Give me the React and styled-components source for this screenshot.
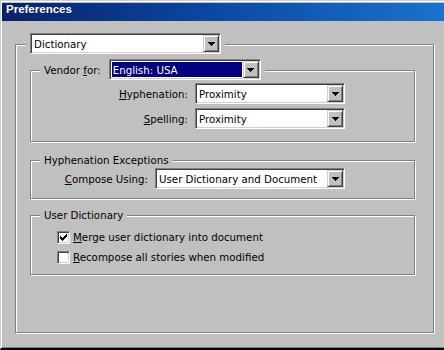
import React from 'react';
import styled, { createGlobalStyle } from 'styled-components';

const GlobalStyle = createGlobalStyle`
  html, body {
    margin: 0;
    padding: 0;
    background: #c0c0c0;
  }
  body {
    font-family: "DejaVu Sans", "Liberation Sans", sans-serif;
    font-size: 10.25px;
    color: #000;
  }
`;

const Window = styled.div`
  width: 444px;
  height: 350px;
  box-sizing: border-box;
  display: flex;
  flex-direction: column;
  background: #c0c0c0;
  border-top: 1px solid #d4d0c8;
  border-left: 1px solid #d4d0c8;
  border-bottom: 2px solid #000;
  box-shadow: inset 1px 1px #fff, inset 0 -1px #808080;
  padding: 2px 0 0 1px;
  overflow: hidden;
`;

const TitleBar = styled.div`
  flex: none;
  height: 18px;
  line-height: 18px;
  padding-left: 4px;
  background: linear-gradient(90deg, #08216b 0%, #0c4aa6 50%, #1a72cc 100%);
  color: #fff;
  font: bold 11.5px "Liberation Sans", Arial, sans-serif;
`;

const Body = styled.div`
  flex: 1;
  min-height: 0;
  display: flex;
  flex-direction: column;
  padding: 23px 10px 15px 13px;
`;

const Group = styled.div`
  position: relative;
  box-sizing: border-box;
  display: flex;
  flex-direction: column;
  border: 1px solid #808080;
  box-shadow: inset 1px 1px #fff, 1px 1px #fff;
  padding: ${p => p.$pad};
  margin-top: ${p => p.$mt || 0}px;
  flex: ${p => (p.$grow ? 1 : 'none')};
`;

const Legend = styled.div`
  position: absolute;
  left: ${p => p.$left}px;
  top: ${p => p.$top}px;
  display: flex;
  align-items: center;
  gap: 8px;
  padding: 0 4px;
  line-height: 14px;
  white-space: nowrap;
  background: #c0c0c0;
`;

const Row = styled.div`
  display: flex;
  align-items: center;
  justify-content: flex-end;
  gap: 7px;
  margin-top: ${p => p.$mt || 0}px;
`;

const Combo = styled.div`
  flex: none;
  display: flex;
  box-sizing: border-box;
  width: ${p => p.$w}px;
  height: 21px;
  padding: 1px;
  background: #fff;
  border: 1px solid;
  border-color: #808080 #fff #fff #808080;
  box-shadow: inset 1px 1px #404040, inset -1px -1px #d4d0c8;
`;

const Value = styled.div`
  flex: 1;
  display: flex;
  align-items: center;
  margin: 1px;
  padding-left: 1px;
  white-space: nowrap;
  overflow: hidden;
  background: ${p => (p.$selected ? '#000080' : 'transparent')};
  color: ${p => (p.$selected ? '#fff' : '#000')};
`;

const ArrowBtn = styled.div`
  flex: none;
  width: 16px;
  height: 17px;
  box-sizing: border-box;
  display: flex;
  align-items: center;
  justify-content: center;
  background: #c0c0c0;
  border: 1px solid;
  border-color: #d4d0c8 #404040 #404040 #d4d0c8;
  box-shadow: inset 1px 1px #fff, inset -1px -1px #808080;
`;

const CheckRow = styled.label`
  display: flex;
  align-items: center;
  gap: 3px;
  height: 20px;
`;

const Box = styled.span`
  flex: none;
  width: 13px;
  height: 13px;
  box-sizing: border-box;
  display: flex;
  align-items: center;
  justify-content: center;
  background: #fff;
  border: 1px solid;
  border-color: #808080 #fff #fff #808080;
  box-shadow: inset 1px 1px #404040, inset -1px -1px #d4d0c8;
`;

const Dropdown = ({ width, value, selected }) => (
  <Combo $w={width}>
    <Value $selected={selected}>{value}</Value>
    <ArrowBtn>
      <svg width="7" height="4" viewBox="0 0 7 4" shapeRendering="crispEdges">
        <path d="M0 0H7V1H6V2H5V3H4V4H3V3H2V2H1V1H0Z" fill="#000" />
      </svg>
    </ArrowBtn>
  </Combo>
);

const Checkbox = ({ checked, children }) => (
  <CheckRow>
    <Box>
      {checked && (
        <svg width="7" height="7" viewBox="0 0 7 7" shapeRendering="crispEdges">
          <path
            d="M6 0h1v1h-1z M5 1h2v1h-2z M0 2h1v1h-1z M4 2h3v1h-3z M0 3h2v1h-2z M3 3h3v1h-3z M0 4h5v1h-5z M1 5h3v1h-3z M2 6h1v1h-1z"
            fill="#000"
          />
        </svg>
      )}
    </Box>
    <span>{children}</span>
  </CheckRow>
);

export default function App() {
  return (
    <>
      <GlobalStyle />
      <Window>
        <TitleBar>Preferences</TitleBar>
        <Body>
          <Group $grow $pad="25px 18px 0 14px">
            <Legend $left={10} $top={-12}>
              <Dropdown width={191} value="Dictionary" />
            </Legend>

            <Group $pad="12px 69px 12px 0">
              <Legend $left={9} $top={-12}>
                <span>
                  Vendor <u>f</u>or:
                </span>
                <Dropdown width={152} value="English: USA" selected />
              </Legend>
              <Row>
                <span>
                  <u>H</u>yphenation:
                </span>
                <Dropdown width={150} value="Proximity" />
              </Row>
              <Row $mt={4}>
                <span>
                  <u>S</u>pelling:
                </span>
                <Dropdown width={150} value="Proximity" />
              </Row>
            </Group>

            <Group $mt={18} $pad="7px 69px 9px 0">
              <Legend $left={9} $top={-8}>Hyphenation Exceptions</Legend>
              <Row>
                <span>
                  <u>C</u>ompose Using:
                </span>
                <Dropdown width={190} value="User Dictionary and Document" />
              </Row>
            </Group>

            <Group $mt={16} $pad="11px 0 7px 26px">
              <Legend $left={9} $top={-8}>User Dictionary</Legend>
              <Checkbox checked>
                <u>M</u>erge user dictionary into document
              </Checkbox>
              <Checkbox>
                <u>R</u>ecompose all stories when modified
              </Checkbox>
            </Group>
          </Group>
        </Body>
      </Window>
    </>
  );
}
